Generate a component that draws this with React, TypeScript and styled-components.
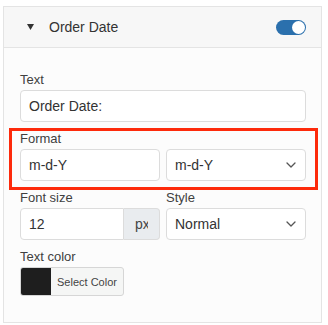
import React from 'react';
import styled, { createGlobalStyle } from 'styled-components';

const GlobalStyle = createGlobalStyle`
  * { box-sizing: border-box; }
  body {
    margin: 0;
    background: #fff;
    font-family: 'Liberation Sans', Arial, Helvetica, sans-serif;
    color: #333;
  }
`;

const Scroller = styled.div`
  height: 325px;
  overflow-y: scroll;

  &::-webkit-scrollbar {
    width: 6px;
  }
  &::-webkit-scrollbar-track {
    background: #fafafa;
    border-left: 1px solid #e6e6e6;
  }
  &::-webkit-scrollbar-thumb {
    background: #c2c2c2;
    border-left: 3px solid transparent;
    border-right: 1px solid transparent;
    background-clip: padding-box;
  }
`;

const Page = styled.div`
  padding: 6px 0 0 3px;
  min-height: 794px;
`;

const Panel = styled.section`
  width: 319px;
  border: 1px solid #e4e4e4;
  background: #fcfcfc;
`;

const HeaderBar = styled.div`
  display: flex;
  align-items: center;
  height: 41px;
  padding: 0 15px 0 23px;
  background: #f7f7f7;
  border-bottom: 1px solid #e4e4e4;
`;

const Caret = styled.svg`
  width: 7px;
  height: 6px;
  margin-right: 15px;
  flex-shrink: 0;
`;

const Title = styled.div`
  flex: 1;
  font-size: 14px;
  color: #333;
`;

const Toggle = styled.div<{ on: boolean }>`
  width: 30px;
  height: 15px;
  border-radius: 8px;
  background: ${(p) => (p.on ? '#2b70ad' : '#ccc')};
  display: flex;
  align-items: center;
  justify-content: ${(p) => (p.on ? 'flex-end' : 'flex-start')};
  padding: 0 1px;
`;

const Knob = styled.div`
  width: 13px;
  height: 13px;
  border-radius: 50%;
  background: #fff;
`;

const Body = styled.div`
  padding: 24px 15px 23px 16px;
`;

const Field = styled.div`
  margin-bottom: 9px;
  &:last-child {
    margin-bottom: 0;
  }
`;

const Highlighted = styled(Field)`
  position: relative;
  &::after {
    content: '';
    position: absolute;
    top: -3px;
    left: -11px;
    right: -12px;
    bottom: -9px;
    border: 3px solid #fd2a0b;
    pointer-events: none;
  }
`;

const Label = styled.div`
  font-size: 13px;
  line-height: 16px;
  color: #404040;
  margin-bottom: 2px;
`;

const Row = styled.div`
  display: grid;
  grid-template-columns: 1fr 1fr;
  gap: 6px;
`;

const TextInput = styled.div<{ joined?: boolean }>`
  height: 32px;
  flex: 1;
  display: flex;
  align-items: center;
  padding: 0 8px;
  background: #fff;
  border: 1px solid #dcdcdc;
  border-radius: ${(p) => (p.joined ? '4px 0 0 4px' : '4px')};
  font-size: 14px;
  color: #333;
`;

const SelectBox = styled.div`
  height: 32px;
  display: flex;
  align-items: center;
  justify-content: space-between;
  padding: 0 9px 0 8px;
  background: #fff;
  border: 1px solid #dcdcdc;
  border-radius: 4px;
  font-size: 14px;
  color: #333;
`;

const InputGroup = styled.div`
  display: flex;
`;

const Addon = styled.div`
  width: 36px;
  height: 32px;
  display: flex;
  align-items: center;
  justify-content: center;
  background: #e9ecef;
  border: 1px solid #dcdcdc;
  border-left: none;
  border-radius: 0 4px 4px 0;
  font-size: 14px;
  color: #444;
`;

const Clip = styled.span`
  display: inline-block;
  width: 13px;
  overflow: hidden;
  white-space: nowrap;
`;

const ColorButton = styled.div`
  display: inline-flex;
  align-items: stretch;
  height: 29px;
  border: 1px solid #d6d6d6;
  border-radius: 3px;
  background: #f5f6f5;
  overflow: hidden;
`;

const Swatch = styled.div<{ color: string }>`
  width: 30px;
  background: ${(p) => p.color};
`;

const SwatchText = styled.div`
  display: flex;
  align-items: center;
  padding: 0 6px;
  font-size: 11px;
  color: #444;
`;

const Chevron = () => (
  <svg width='10' height='6' viewBox='0 0 10 6'>
    <polyline
      points='1,1 5,5 9,1'
      fill='none'
      stroke='#555'
      strokeWidth='1.3'
      strokeLinecap='round'
      strokeLinejoin='round'
    />
  </svg>
);

const Select: React.FC<{ value: string }> = ({ value }) => (
  <SelectBox>
    <span>{value}</span>
    <Chevron />
  </SelectBox>
);

const App: React.FC = () => (
  <Scroller>
    <GlobalStyle />
    <Page>
      <Panel>
        <HeaderBar>
          <Caret viewBox='0 0 7 6'>
            <polygon points='0,0 7,0 3.5,6' fill='#333' />
          </Caret>
          <Title>Order Date</Title>
          <Toggle on>
            <Knob />
          </Toggle>
        </HeaderBar>
        <Body>
          <Field>
            <Label>Text</Label>
            <TextInput>Order Date:</TextInput>
          </Field>
          <Highlighted>
            <Label>Format</Label>
            <Row>
              <TextInput>m-d-Y</TextInput>
              <Select value='m-d-Y' />
            </Row>
          </Highlighted>
          <Row>
            <Field>
              <Label>Font size</Label>
              <InputGroup>
                <TextInput joined>12</TextInput>
                <Addon>
                  <Clip>px</Clip>
                </Addon>
              </InputGroup>
            </Field>
            <Field>
              <Label>Style</Label>
              <Select value='Normal' />
            </Field>
          </Row>
          <Field>
            <Label>Text color</Label>
            <ColorButton>
              <Swatch color='#1e1e1e' />
              <SwatchText>Select Color</SwatchText>
            </ColorButton>
          </Field>
        </Body>
      </Panel>
    </Page>
  </Scroller>
);

export default App;
